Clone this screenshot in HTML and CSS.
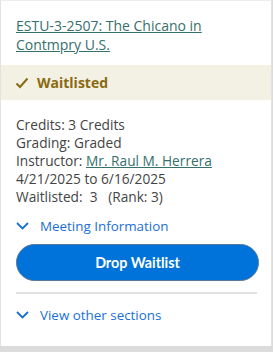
FILE: index.html
```
<!DOCTYPE html>
<html>
<head>
<meta charset="utf-8">
<link rel="stylesheet" href="styles.css">
</head>
<body>
<div class="card">
  <div class="title"><a href="#">ESTU-3-2507: The Chicano in Contmpry U.S.</a></div>
  <div class="status">
    <svg class="check" width="14" height="12" viewBox="0 0 14 12"><path d="M1.5 6.5 L5 10 L12.5 1.5" fill="none" stroke="#8a6a10" stroke-width="2"/></svg>
    <span>Waitlisted</span>
  </div>
  <div class="details">
    <div>Credits: 3 Credits</div>
    <div>Grading: Graded</div>
    <div>Instructor: <a href="#">Mr. Raul M. Herrera</a></div>
    <div>4/21/2025 to 6/16/2025</div>
    <div>Waitlisted:&nbsp; 3 &nbsp; (Rank: 3)</div>
  </div>
  <div class="toggle meeting">
    <svg class="chev" width="13" height="8" viewBox="0 0 13 8"><path d="M1 1 L6.5 6.5 L12 1" fill="none" stroke="#1a6fd6" stroke-width="1.8"/></svg>
    <span>Meeting Information</span>
  </div>
  <div class="actions">
    <button class="drop">Drop Waitlist</button>
  </div>
  <div class="divider"></div>
  <div class="toggle other">
    <svg class="chev" width="13" height="8" viewBox="0 0 13 8"><path d="M1 1 L6.5 6.5 L12 1" fill="none" stroke="#1a6fd6" stroke-width="1.8"/></svg>
    <span>View other sections</span>
  </div>
</div>
</body>
</html>
```
FILE: styles.css
```
html, body {
  margin: 0;
  padding: 0;
}
body {
  background: #dcdcdc;
  width: 273px;
  height: 352px;
  font-family: "Open Sans", "Liberation Sans", sans-serif;
  font-size: 13.7px;
  color: #444;
}
.card {
  background: #fff;
  height: 346px;
  border-left: 1px solid #e2e2e2;
  border-right: 1px solid #e2e2e2;
  border-top: 1px solid #ececec;
  box-sizing: border-box;
  width: 272px;
}
.title {
  padding: 15px 15px 0 15px;
  font-size: 14px;
  line-height: 19px;
  height: 49px;
}
.title a {
  color: #35706c;
  text-decoration: underline;
}
.status {
  background: #f3f0e4;
  height: 35px;
  display: flex;
  align-items: center;
  padding-left: 14px;
  gap: 8px;
  color: #8a6a10;
  font-weight: bold;
  font-size: 14px;
}
.details {
  padding: 16px 15px 0 15px;
  line-height: 18px;
}
.details a {
  color: #35706c;
  text-decoration: underline;
}
.toggle {
  display: flex;
  align-items: center;
  gap: 11px;
  padding-left: 15px;
  color: #1a6fd6;
  font-size: 13.4px;
}
.meeting {
  margin-top: 11px;
  height: 18px;
}
.actions {
  padding: 9px 14px 0 15px;
}
.drop {
  width: 243px;
  height: 37px;
  border-radius: 19px;
  background: #0073da;
  border: 1px solid #5a7898;
  color: #fff;
  font-family: "Lato", "Open Sans", sans-serif;
  font-weight: bold;
  font-size: 14.3px;
  display: block;
}
.divider {
  margin: 11px 14px 0 15px;
  height: 2px;
  background: #e2e2e2;
}
.other {
  margin-top: 12px;
  height: 18px;
}
```
